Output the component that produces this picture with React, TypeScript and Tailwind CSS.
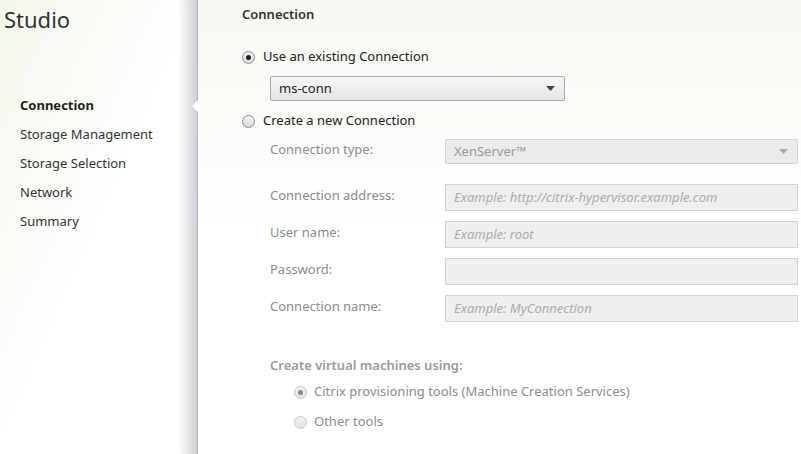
const NAV_ITEMS = ['Connection', 'Storage Management', 'Storage Selection', 'Network', 'Summary'];

const FIELDS = [
  { label: 'Connection address:', placeholder: 'Example: http://citrix-hypervisor.example.com' },
  { label: 'User name:', placeholder: 'Example: root' },
  { label: 'Password:', placeholder: '' },
  { label: 'Connection name:', placeholder: 'Example: MyConnection' },
];

function Radio({ checked, disabled }: { checked?: boolean; disabled?: boolean }) {
  return (
    <span
      className={`w-[13px] h-[13px] rounded-full border flex items-center justify-center shrink-0 ${
        disabled
          ? 'border-[#c8c8c8] bg-gradient-to-b from-[#f2f2f2] to-[#e2e2e2]'
          : 'border-[#8c8c8c] bg-gradient-to-b from-[#f4f4f4] to-[#d9d9d9]'
      }`}
    >
      {checked && (
        <span className={`w-[5px] h-[5px] rounded-full ${disabled ? 'bg-[#8a8a8a]' : 'bg-[#222]'}`} />
      )}
    </span>
  );
}

function Caret({ color }: { color: string }) {
  return (
    <svg width="9" height="5" viewBox="0 0 9 5">
      <path d="M0 0h9L4.5 5z" fill={color} />
    </svg>
  );
}

export default function App() {
  return (
    <div
      className="w-[801px] h-[454px] flex overflow-hidden bg-white text-[13px]"
      style={{ fontFamily: '"Noto Sans", "Open Sans", sans-serif' }}
    >
      {/* Sidebar */}
      <aside className="relative w-[198px] shrink-0 bg-gradient-to-br from-[#f3f8ec] via-white to-white">
        <div className="absolute inset-y-0 right-0 w-[20px] bg-gradient-to-r from-transparent to-[#c9ced6]" />
        <div className="absolute inset-y-0 right-0 w-px bg-[#b0b5bc]" />
        <div className="absolute right-[-1px] top-[99px] w-0 h-0 border-y-[7px] border-y-transparent border-r-[7px] border-r-white" />

        <div className="relative">
          <h1 className="pl-[4px] pt-[4px] text-[22px] leading-[30px] text-[#333]">Studio</h1>
          <nav className="mt-[57px] pl-[20px] flex flex-col">
            {NAV_ITEMS.map((item, i) => (
              <div
                key={item}
                className={`h-[29px] leading-[29px] ${i === 0 ? 'font-bold text-[#1e1e1e]' : 'text-[#333]'}`}
              >
                {item}
              </div>
            ))}
          </nav>
        </div>
      </aside>

      {/* Content */}
      <main className="flex-1 bg-gradient-to-b from-[#f6f9f1] via-white to-white">
        <div className="pl-[44px] pt-[4px]">
          <h2 className="text-[13px] leading-[20px] font-semibold text-[#333]">Connection</h2>

          <label className="mt-[23px] flex items-center gap-[8px] text-[#222] h-[20px]">
            <Radio checked />
            <span>Use an existing Connection</span>
          </label>

          <div className="ml-[28px] mt-[9px] w-[295px] h-[25px] border border-[#a9a9a9] rounded-[2px] bg-gradient-to-b from-[#f7f7f7] to-[#e5e5e5] flex items-center justify-between pl-[8px] pr-[9px] text-[#222]">
            <span>ms-conn</span>
            <Caret color="#444" />
          </div>

          <label className="mt-[10px] flex items-center gap-[8px] text-[#222] h-[20px]">
            <Radio />
            <span>Create a new Connection</span>
          </label>
        </div>

        <div className="pl-[72px] pr-[3px] mt-[8px] grid grid-cols-[175px_1fr] items-center gap-y-[10px] text-[#8c8c8c]">
          <span className="-mt-[3px]">Connection type:</span>
          <div className="h-[25px] border border-[#d4d4d4] rounded-[2px] bg-[#ebebeb] flex items-center justify-between pl-[8px] pr-[9px] text-[#9a9a9a]">
            <span>XenServer™</span>
            <Caret color="#a8a8a8" />
          </div>

          <div className="col-span-2 h-0" />

          {FIELDS.map((f) => (
            <div key={f.label} className="contents">
              <span className="-mt-[3px]">{f.label}</span>
              <div className="h-[27px] border border-[#d2d2d2] bg-[#efefef] flex items-center pl-[8px] italic text-[#ababab]">
                {f.placeholder}
              </div>
            </div>
          ))}
        </div>

        <div className="pl-[72px] mt-[33px]">
          <div className="font-semibold text-[#9a9a9a] h-[20px] leading-[20px]">Create virtual machines using:</div>
          <div className="pl-[24px] text-[#8c8c8c]">
            <label className="mt-[7px] flex items-center gap-[7px] h-[20px]">
              <Radio checked disabled />
              <span>Citrix provisioning tools (Machine Creation Services)</span>
            </label>
            <label className="mt-[10px] flex items-center gap-[7px] h-[20px]">
              <Radio disabled />
              <span>Other tools</span>
            </label>
          </div>
        </div>
      </main>
    </div>
  );
}
